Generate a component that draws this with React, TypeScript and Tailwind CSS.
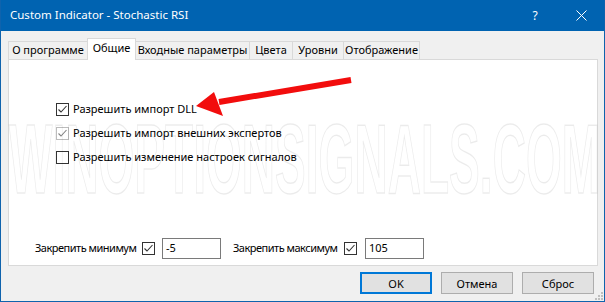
import React from "react";

const tabs = [
  { label: "О программе", w: "w-[80px]" },
  { label: "Общие", w: "w-[49px]", active: true },
  { label: "Входные параметры", w: "w-[115px]" },
  { label: "Цвета", w: "w-[44px]" },
  { label: "Уровни", w: "w-[52px]" },
  { label: "Отображение", w: "w-[77px]" },
];

function CheckBox({ checked, disabled }: { checked?: boolean; disabled?: boolean }) {
  return (
    <span
      className={
        "w-[13px] h-[13px] shrink-0 bg-white border flex items-center justify-center " +
        (disabled ? "border-[#bcbcbc]" : "border-[#333333]")
      }
    >
      {checked && (
        <svg width="11" height="11" viewBox="0 0 11 11">
          <polyline
            points="1.5,5.5 4,8 9.5,2"
            fill="none"
            stroke={disabled ? "#838383" : "#333333"}
            strokeWidth="1.1"
          />
        </svg>
      )}
    </span>
  );
}

function Button({ label, primary }: { label: string; primary?: boolean }) {
  return (
    <button
      className={
        "w-[72px] h-[22px] bg-[#e1e1e1] text-[11px] leading-none " +
        (primary ? "border-2 border-[#0078d7]" : "border border-[#adadad]")
      }
    >
      {label}
    </button>
  );
}

export default function App() {
  return (
    <div className="relative w-[605px] h-[302px] overflow-hidden bg-[#f0f0f0] border-x border-b border-[#0f63ad] flex flex-col font-['Segoe_UI','Noto_Sans',sans-serif] text-[11px] text-black">
      {/* title bar */}
      <div className="h-[31px] shrink-0 bg-[#0063b1] flex items-center text-white">
        <div className="pl-[9px] flex-1 text-[11.5px] pb-[1px]">Custom Indicator - Stochastic RSI</div>
        <div className="w-[46px] h-full flex items-center justify-center text-[12px]">?</div>
        <div className="w-[46px] h-full flex items-center justify-center">
          <svg width="11" height="11" viewBox="0 0 11 11">
            <path d="M0.5 0.5 L10.5 10.5 M10.5 0.5 L0.5 10.5" stroke="white" strokeWidth="1" />
          </svg>
        </div>
      </div>

      <div className="flex-1 flex flex-col pl-[7px] pr-[6px] pt-[7px]">
        {/* tabs */}
        <div className="flex items-end h-[21px] pl-[1px]">
          {tabs.map((t) => (
            <div
              key={t.label}
              className={
                "-ml-px border border-b-0 border-[#d9d9d9] flex items-center justify-center whitespace-nowrap " +
                t.w +
                (t.active
                  ? " relative z-10 h-[22px] -mb-px bg-white pb-[2px]"
                  : " h-[18px] bg-[#f0f0f0]")
              }
            >
              {t.label}
            </div>
          ))}
        </div>

        {/* panel */}
        <div className="h-[207px] bg-white border border-[#d9d9d9] flex flex-col">
          <div className="flex flex-col gap-[11px] pl-[47px] pt-[43px]">
            <label className="flex items-center gap-[4px] h-[13px]">
              <CheckBox checked />
              <span>Разрешить импорт DLL</span>
            </label>
            <label className="flex items-center gap-[4px] h-[13px]">
              <CheckBox checked disabled />
              <span>Разрешить импорт внешних экспертов</span>
            </label>
            <label className="flex items-center gap-[4px] h-[13px]">
              <CheckBox />
              <span>Разрешить изменение настроек сигналов</span>
            </label>
          </div>

          <div className="mt-auto flex items-center pl-[26px] pb-[6px]">
            <span className="w-[103px] whitespace-nowrap tracking-[-0.5px]">Закрепить минимум</span>
            <span className="ml-[4px]">
              <CheckBox checked />
            </span>
            <div className="ml-[7px] w-[59px] h-[21px] border border-[#7a7a7a] flex items-center px-[3px]">-5</div>
            <span className="ml-[12px] w-[108px] whitespace-nowrap tracking-[-0.5px]">Закрепить максимум</span>
            <span className="ml-[3px]">
              <CheckBox checked />
            </span>
            <div className="ml-[8px] w-[59px] h-[21px] border border-[#7a7a7a] flex items-center px-[3px]">105</div>
          </div>
        </div>

        {/* buttons */}
        <div className="flex justify-end gap-[9px] pr-[4px] mt-[6px]">
          <Button label="OK" primary />
          <Button label="Отмена" />
          <Button label="Сброс" />
        </div>
      </div>

      {/* size grip */}
      <div className="absolute right-[1px] bottom-[1px] w-[8px] h-[8px] grid grid-cols-3 gap-px opacity-60">
        <span />
        <span />
        <span className="bg-[#a0a0a0]" />
        <span />
        <span className="bg-[#a0a0a0]" />
        <span className="bg-[#a0a0a0]" />
        <span className="bg-[#a0a0a0]" />
        <span className="bg-[#a0a0a0]" />
        <span className="bg-[#a0a0a0]" />
      </div>

      {/* watermark */}
      <div className="pointer-events-none absolute left-[8px] top-[110px] origin-left scale-x-[0.47] whitespace-nowrap font-['Liberation_Sans',sans-serif] font-bold text-[98px] leading-none text-transparent [-webkit-text-stroke:1.5px_rgba(0,0,0,0.08)]">
        WINOPTIONSIGNALS.COM
      </div>

      {/* red arrow */}
      <svg className="pointer-events-none absolute left-0 top-0" width="605" height="302">
        <line x1="350" y1="80" x2="218" y2="102" stroke="#f20d0d" strokeWidth="6" />
        <polygon points="195,106 213,92 222,116" fill="#f20d0d" />
      </svg>
    </div>
  );
}
